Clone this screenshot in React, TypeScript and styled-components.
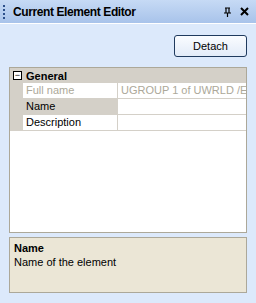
import { FC } from 'react';
import styled, { createGlobalStyle } from 'styled-components';

const GlobalStyle = createGlobalStyle`
	html, body {
		margin: 0;
		padding: 0;
		background: #dce9fb;
	}
	* {
		box-sizing: border-box;
	}
`;

type Row = { label: string; value: string; disabled?: boolean; selected?: boolean };

const rows: Row[] = [
	{ label: 'Full name', value: 'UGROUP 1 of UWRLD /E', disabled: true },
	{ label: 'Name', value: '', selected: true },
	{ label: 'Description', value: '' },
];

const App: FC = () => {
	return (
		<Wrapper>
			<GlobalStyle />
			<TitleBar>
				<Grip />
				<Title>Current Element Editor</Title>
				<TitleIcons>
					<svg width="9" height="10" viewBox="0 0 9 10">
						<path d="M2 1h5M3 1v5M6 1v5M1 6h7M4.5 6v4" stroke="#000" strokeWidth="1.2" fill="none" />
					</svg>
					<svg width="9" height="9" viewBox="0 0 9 9">
						<path d="M1 1l7 7M8 1l-7 7" stroke="#000" strokeWidth="2" />
					</svg>
				</TitleIcons>
			</TitleBar>
			<Body>
				<Toolbar>
					<DetachButton>Detach</DetachButton>
				</Toolbar>
				<Grid>
					<CategoryRow>
						<Toggle>−</Toggle>
						<CategoryLabel>General</CategoryLabel>
					</CategoryRow>
					{rows.map((row) => (
						<PropRow key={row.label}>
							<Margin />
							<LabelCell $disabled={row.disabled} $selected={row.selected}>
								{row.label}
							</LabelCell>
							<ValueCell $disabled={row.disabled}>{row.value}</ValueCell>
						</PropRow>
					))}
				</Grid>
				<HelpBox>
					<HelpTitle>Name</HelpTitle>
					<HelpText>Name of the element</HelpText>
				</HelpBox>
			</Body>
		</Wrapper>
	);
};

export const Wrapper = styled.div`
	width: 256px;
	height: 303px;
	display: flex;
	flex-direction: column;
	font-family: 'Liberation Sans', Arial, sans-serif;
	font-size: 11px;
	color: #000;
	background: #dce9fb;
`;

export const TitleBar = styled.div`
	height: 24px;
	flex-shrink: 0;
	display: flex;
	align-items: center;
	padding: 0 7px 0 3px;
	background: linear-gradient(to bottom, #c6daf5, #a8c3ea);
	border-bottom: 1px solid #fff;
`;

export const Grip = styled.div`
	width: 2px;
	height: 14px;
	margin-right: 8px;
	background: repeating-linear-gradient(to bottom, #2b4f8a 0 2px, transparent 2px 4px);
`;

export const Title = styled.div`
	flex: 1;
	font-weight: bold;
	font-size: 12px;
	letter-spacing: -0.4px;
`;

export const TitleIcons = styled.div`
	display: flex;
	align-items: center;
	gap: 8px;
`;

export const Body = styled.div`
	flex: 1;
	display: flex;
	flex-direction: column;
	padding: 11px 9px 10px 9px;
`;

export const Toolbar = styled.div`
	display: flex;
	justify-content: flex-end;
	margin-bottom: 10px;
`;

export const DetachButton = styled.button`
	width: 73px;
	height: 22px;
	font-family: inherit;
	font-size: 11px;
	color: #000;
	background: linear-gradient(to bottom, #fafcff, #e2ebf8);
	border: 1px solid #1f3a5e;
	border-radius: 3px;
	padding: 0;
`;

export const Grid = styled.div`
	height: 166px;
	background: #fff;
	border: 1px solid #aca899;
	display: flex;
	flex-direction: column;
`;

export const CategoryRow = styled.div`
	height: 15px;
	display: flex;
	align-items: center;
	background: #d4d0c8;
`;

export const Toggle = styled.div`
	width: 9px;
	height: 9px;
	margin: 0 4px 0 3px;
	border: 1px solid #000;
	background: #fff;
	font-size: 9px;
	line-height: 6px;
	text-align: center;
`;

export const CategoryLabel = styled.div`
	font-weight: bold;
	font-size: 11px;
`;

export const PropRow = styled.div`
	height: 16px;
	display: flex;
	border-bottom: 1px solid #d4d0c8;
`;

export const Margin = styled.div`
	width: 13px;
	background: #d4d0c8;
`;

export const LabelCell = styled.div<{ $disabled?: boolean; $selected?: boolean }>`
	width: 95px;
	padding-left: 3px;
	line-height: 15px;
	white-space: nowrap;
	border-right: 1px solid #d4d0c8;
	color: ${({ $disabled }) => ($disabled ? '#aca899' : '#000')};
	background: ${({ $selected }) => ($selected ? '#d4d0c8' : '#fff')};
`;

export const ValueCell = styled.div<{ $disabled?: boolean }>`
	flex: 1;
	padding-left: 3px;
	line-height: 15px;
	white-space: nowrap;
	overflow: hidden;
	color: ${({ $disabled }) => ($disabled ? '#aca899' : '#000')};
`;

export const HelpBox = styled.div`
	margin-top: 4px;
	flex: 1;
	background: #ebe6d6;
	border: 1px solid #aca899;
	padding: 3px 4px;
`;

export const HelpTitle = styled.div`
	font-weight: bold;
	font-size: 11px;
	line-height: 14px;
`;

export const HelpText = styled.div`
	font-size: 11px;
	line-height: 14px;
`;

export default App;
